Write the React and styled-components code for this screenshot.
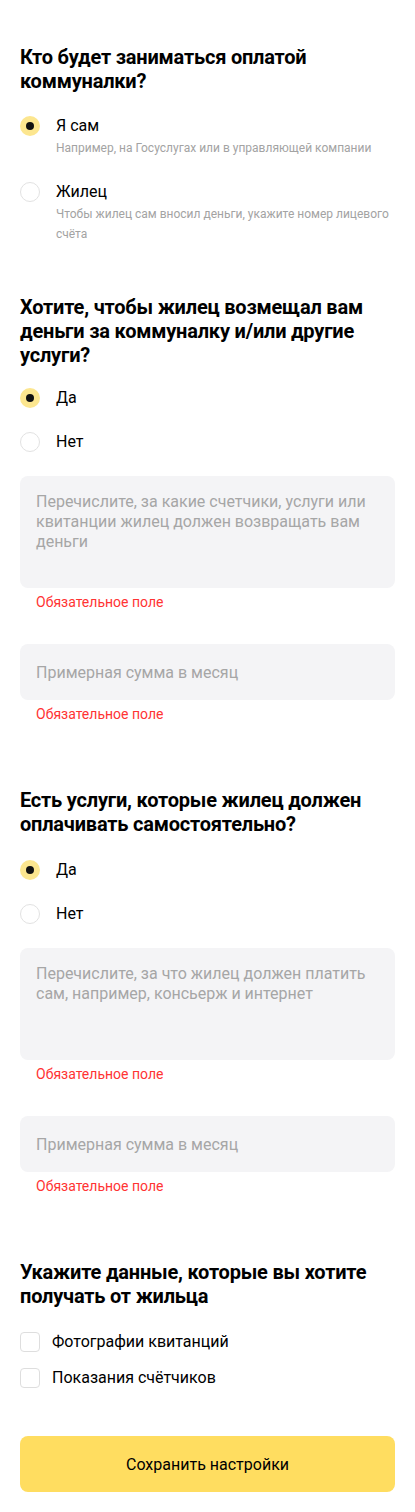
import React, { useState } from "react";
import styled, { createGlobalStyle } from "styled-components";

const Global = createGlobalStyle`
  html, body { margin: 0; padding: 0; background: #fff; }
  body { font-family: Roboto, "Noto Sans", Arial, sans-serif; color: #000; -webkit-font-smoothing: antialiased; }
  * { box-sizing: border-box; }
`;

const Page = styled.div`
  width: 415px;
  padding: 45px 20px 20px;
  display: flex;
  flex-direction: column;
`;

const Section = styled.section`
  display: flex;
  flex-direction: column;
  margin-bottom: ${(p) => p.$gap || 51}px;
`;

const Heading = styled.h2`
  margin: 0 0 ${(p) => p.$after || 21}px;
  font-size: 20px;
  line-height: 24px;
  font-weight: 700;
  letter-spacing: -0.2px;
`;

const RadioGroup = styled.div`
  display: flex;
  flex-direction: column;
  gap: ${(p) => p.$gap || 20}px;
`;

const RadioRow = styled.label`
  display: grid;
  grid-template-columns: 20px 1fr;
  column-gap: 16px;
  cursor: pointer;
`;

const Circle = styled.span`
  width: 20px;
  height: 20px;
  margin-top: 2px;
  border-radius: 50%;
  display: flex;
  align-items: center;
  justify-content: center;
  background: ${(p) => (p.$checked ? "#fce68f" : "#fff")};
  border: ${(p) => (p.$checked ? "none" : "1px solid #e2e2e2")};
  &::after {
    content: "";
    display: ${(p) => (p.$checked ? "block" : "none")};
    width: 8px;
    height: 8px;
    border-radius: 50%;
    background: #111;
  }
`;

const RadioText = styled.div`
  display: flex;
  flex-direction: column;
`;

const Label = styled.span`
  font-size: 16px;
  line-height: 24px;
  color: #000;
`;

const Hint = styled.span`
  font-size: 12px;
  line-height: 20px;
  color: #a3a3a3;
`;

const Field = styled.div`
  display: flex;
  flex-direction: column;
  margin-top: ${(p) => p.$top || 0}px;
`;

const TextArea = styled.textarea`
  width: 100%;
  height: 112px;
  resize: none;
  border: none;
  outline: none;
  border-radius: 8px;
  background: #f4f4f6;
  padding: 16px;
  font-family: inherit;
  font-size: 16px;
  line-height: 20px;
  color: #000;
  &::placeholder { color: #a6a6a6; }
`;

const Input = styled.input`
  width: 100%;
  height: 56px;
  border: none;
  outline: none;
  border-radius: 8px;
  background: #f4f4f6;
  padding: 0 16px;
  font-family: inherit;
  font-size: 16px;
  color: #000;
  &::placeholder { color: #a6a6a6; }
`;

const Error = styled.div`
  margin-top: 4px;
  padding-left: 16px;
  font-size: 14px;
  line-height: 20px;
  color: #ff3333;
`;

const CheckList = styled.div`
  display: flex;
  flex-direction: column;
  gap: 12px;
`;

const CheckRow = styled.label`
  display: flex;
  align-items: center;
  gap: 12px;
  cursor: pointer;
`;

const Box = styled.span`
  width: 20px;
  height: 20px;
  border-radius: 4px;
  border: 1px solid #dedede;
  background: ${(p) => (p.$checked ? "#fce68f" : "#fff")};
`;

const Button = styled.button`
  width: 100%;
  height: 56px;
  border: none;
  border-radius: 8px;
  background: #ffdd60;
  font-family: inherit;
  font-size: 16px;
  color: #000;
  cursor: pointer;
`;

function Radio({ checked, label, hint, onClick }) {
  return (
    <RadioRow onClick={onClick}>
      <Circle $checked={checked} />
      <RadioText>
        <Label>{label}</Label>
        {hint && <Hint>{hint}</Hint>}
      </RadioText>
    </RadioRow>
  );
}

function MoneyFields({ placeholder }) {
  return (
    <>
      <Field $top={22}>
        <TextArea placeholder={placeholder} />
        <Error>Обязательное поле</Error>
      </Field>
      <Field $top={32}>
        <Input placeholder="Примерная сумма в месяц" />
        <Error>Обязательное поле</Error>
      </Field>
    </>
  );
}

export default function App() {
  const [payer, setPayer] = useState("self");
  const [refund, setRefund] = useState(true);
  const [own, setOwn] = useState(true);
  const [photos, setPhotos] = useState(false);
  const [meters, setMeters] = useState(false);

  return (
    <Page>
      <Global />
      <Section $gap={51}>
        <Heading>Кто будет заниматься оплатой коммуналки?</Heading>
        <RadioGroup $gap={22}>
          <Radio
            checked={payer === "self"}
            label="Я сам"
            hint="Например, на Госуслугах или в управляющей компании"
            onClick={() => setPayer("self")}
          />
          <Radio
            checked={payer === "tenant"}
            label="Жилец"
            hint="Чтобы жилец сам вносил деньги, укажите номер лицевого счёта"
            onClick={() => setPayer("tenant")}
          />
        </RadioGroup>
      </Section>

      <Section $gap={64}>
        <Heading $after={19}>
          Хотите, чтобы жилец возмещал вам деньги за коммуналку и/или другие услуги?
        </Heading>
        <RadioGroup>
          <Radio checked={refund} label="Да" onClick={() => setRefund(true)} />
          <Radio checked={!refund} label="Нет" onClick={() => setRefund(false)} />
        </RadioGroup>
        <MoneyFields placeholder="Перечислите, за какие счетчики, услуги или квитанции жилец должен возвращать вам деньги" />
      </Section>

      <Section $gap={64}>
        <Heading $after={22}>
          Есть услуги, которые жилец должен оплачивать самостоятельно?
        </Heading>
        <RadioGroup>
          <Radio checked={own} label="Да" onClick={() => setOwn(true)} />
          <Radio checked={!own} label="Нет" onClick={() => setOwn(false)} />
        </RadioGroup>
        <MoneyFields placeholder="Перечислите, за что жилец должен платить сам, например, консьерж и интернет" />
      </Section>

      <Section $gap={46}>
        <Heading $after={22}>Укажите данные, которые вы хотите получать от жильца</Heading>
        <CheckList>
          <CheckRow onClick={() => setPhotos(!photos)}>
            <Box $checked={photos} />
            <Label>Фотографии квитанций</Label>
          </CheckRow>
          <CheckRow onClick={() => setMeters(!meters)}>
            <Box $checked={meters} />
            <Label>Показания счётчиков</Label>
          </CheckRow>
        </CheckList>
      </Section>

      <Button>Сохранить настройки</Button>
    </Page>
  );
}
